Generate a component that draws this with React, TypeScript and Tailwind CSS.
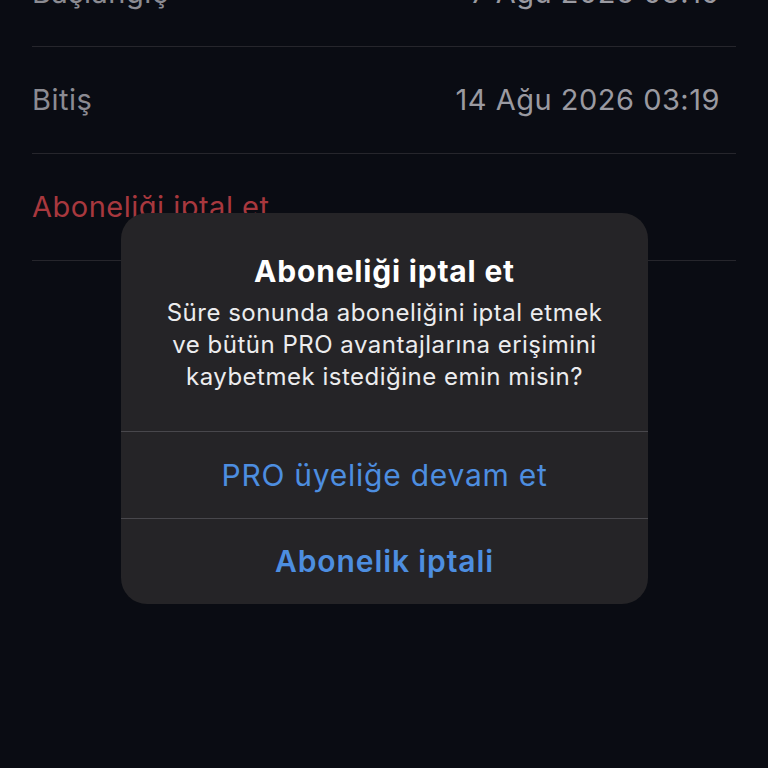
import React from "react";

export default function App() {
  return (
    <div
      className="relative w-[768px] h-[768px] overflow-hidden bg-[#0a0c13]"
      style={{ fontFamily: "Inter, 'Noto Sans', sans-serif" }}
    >
      <div className="-mt-[60px] px-8">
        <div className="flex items-center justify-between h-[106px] pr-4 text-[29px] tracking-[0.5px] text-[#8b8b92]">
          <span>Başlangıç</span>
          <span className="text-[#9a9aa1]">7 Ağu 2026 03:19</span>
        </div>
        <div className="h-px bg-[#26262c]" />
        <div className="flex items-center justify-between h-[106px] pr-4 text-[29px] tracking-[0.5px] text-[#8b8b92]">
          <span>Bitiş</span>
          <span className="text-[#9a9aa1]">14 Ağu 2026 03:19</span>
        </div>
        <div className="h-px bg-[#26262c]" />
        <div className="flex items-center h-[106px] text-[29px] tracking-[0.5px] text-[#a8383e]">
          <span>Aboneliği iptal et</span>
        </div>
        <div className="h-px bg-[#26262c]" />
      </div>

      <div className="absolute left-[121px] top-[213px] w-[527px] rounded-[26px] bg-[#252427] overflow-hidden">
        <div className="px-4 pt-[40px] pb-[38px] flex flex-col items-center text-center">
          <div className="text-[30px] leading-[36px] font-bold tracking-[0.8px] text-white">Aboneliği iptal et</div>
          <div className="mt-[8px] text-[24px] leading-[32px] tracking-[0.5px] text-[#ececee]">
            Süre sonunda aboneliğini iptal etmek
            <br />
            ve bütün PRO avantajlarına erişimini
            <br />
            kaybetmek istediğine emin misin?
          </div>
        </div>
        <div className="h-px bg-[#48474c]" />
        <div className="h-[86px] flex items-center justify-center text-[30px] tracking-[0.75px] text-[#4d8ee0]">
          PRO üyeliğe devam et
        </div>
        <div className="h-px bg-[#48474c]" />
        <div className="h-[85px] flex items-center justify-center text-[30px] font-semibold tracking-[0.9px] text-[#4d8ee0]">
          Abonelik iptali
        </div>
      </div>
    </div>
  );
}
